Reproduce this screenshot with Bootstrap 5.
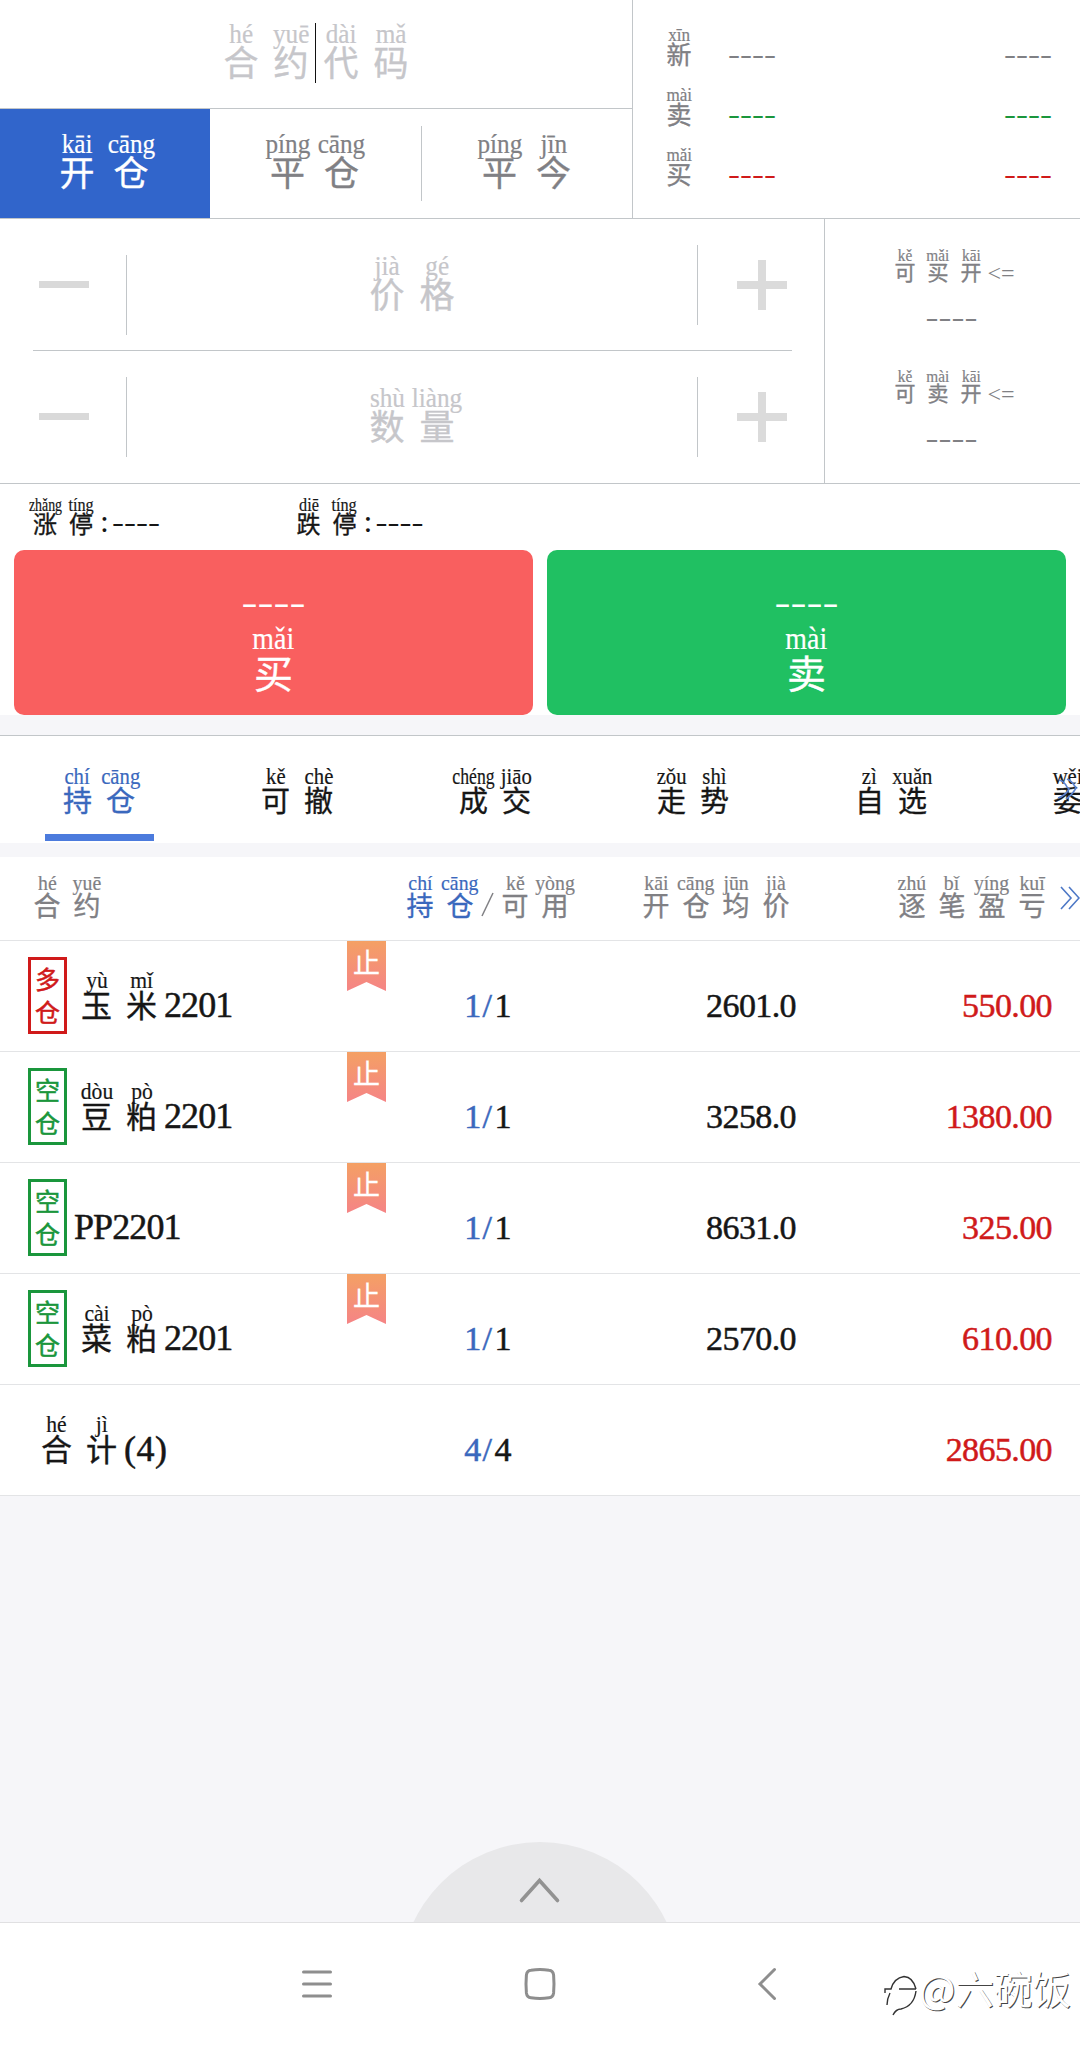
<!DOCTYPE html>
<html lang="zh-CN">
<head>
<meta charset="utf-8">
<meta name="viewport" content="width=device-width, initial-scale=1">
<title>期货交易</title>
<link href="https://cdn.jsdelivr.net/npm/bootstrap@5.3.0/dist/css/bootstrap.min.css" rel="stylesheet">
<style>
  :root { --line:#c2c6c9; --soft:#e3e4e6; --blue:#3165cb; --link:#3a68bd; --red:#d01a1a; --green:#1a963c; --gray:#808084; --hint:#c6c6ca; --page:#f6f6f9; }
  body { width:1080px; height:2052px; overflow:hidden; background:var(--page); color:#161616; font-family:"Liberation Serif","Noto Sans CJK SC",serif; line-height:1; }
  /* annotated character: pinyin above, hanzi below */
  .zi { display:inline-flex; flex-direction:column; align-items:center; flex:none; width:var(--p); white-space:nowrap; }
  .zi i { font-style:normal; font-size:var(--r); line-height:var(--r); transform:translateY(1px) scaleX(.9); -webkit-text-stroke:.2px currentColor; }
  .zi i.tight { transform:translateY(1px) scaleX(.77); }
  .zi b { font-family:"Noto Sans CJK SC",sans-serif; font-weight:400; font-size:var(--h); line-height:.84em; -webkit-text-stroke:.35px currentColor; }
  .lat { line-height:.61em; white-space:nowrap; }
  .s-xl { --h:39px; --r:31px; --p:52px; }
  .s-lg { --h:35px; --r:28px; --p:50px; }
  .s-lg b { transform:translateY(-1px); }
  .s-tab { --h:29px; --r:23px; --p:43px; }
  .s-head { --h:27px; --r:22px; --p:40px; }
  .s-row { --h:31px; --r:24px; --p:45px; }
  .s-quote { --h:25px; --r:19px; --p:36px; }
  .s-limit { --h:24px; --r:18px; --p:36px; }
  .s-cap { --h:21px; --r:17px; --p:33px; }
  .gray { color:var(--gray); } .hint { color:var(--hint); } .link { color:var(--link); } .up { color:var(--red); } .down { color:var(--green); }
  .dash { font-size:36px; transform:scaleY(.72); transform-origin:50% 68%; }
  .quote-head { height:219px; border-bottom:1px solid var(--line); }
  .head-left { width:633px; border-right:1px solid var(--line); }
  .code-field { height:109px; padding-top:19px; border-bottom:1px solid var(--line); }
  .caret { width:1px; height:60px; margin:4px -1px 0 0; background:#111; position:relative; left:-1px; }
  .side-tab { --p:54px; padding:20px 2px 0 0; flex:0 0 211px; }
  .side-tab.on { flex-basis:210px; background:var(--blue); color:#fff; }
  .vr-a { width:1px; height:75px; margin-top:17px; background:var(--line); flex:none; }
  .quotes { padding:24px 28px 0 28px; }
  .quote-line { height:60px; }
  .quote-line .zi { margin-right:31px; }
  .quote-line .zi + .lat, .quote-line .lat:last-child { margin-bottom:19px; }
  .entry { height:265px; border-bottom:1px solid var(--line); }
  .entry-left { width:825px; border-right:1px solid var(--line); }
  .step-row { height:132px; }
  .step-side { width:126px; } .step-side svg { display:block; }
  .step-input { padding-top:32px; }
  .vr-b { width:1px; height:80px; margin-top:26px; background:var(--line); flex:none; }
  .vr-b.low { margin-top:36px; }
  .entry-rule { height:1px; margin:-1px 32px 0 33px; background:var(--line); }
  .caps { padding:27px 2px 0 0; }
  .cap { height:121px; } .cap .lat { font-size:24px; margin-bottom:0; }
  .cap .dash { font-size:39px; line-height:68px; transform-origin:50% 57%; }
  .limits { height:66px; padding:11px 0 0 27px; }
  .limits .dash { font-size:36px; } .limits .colon { width:13px; font-size:32px; padding-left:1px; margin-bottom:2px; }
  .limits > div { width:263.5px; }
  .trade { background:#fff; height:165px; padding:0 14px; gap:14px; }
  .btn-trade { height:165px; padding:31px 0 0; border:0; border-radius:10px; color:#fff !important; line-height:1; }
  .btn-trade .dash { font-size:48px; line-height:40px; margin-bottom:1px; transform-origin:50% 64%; }
  .btn-trade b { transform:translateY(2px); }
  .buy, .buy:hover { background:#f95f5f; } .sell, .sell:hover { background:#20c062; }
  .tabs-bar { margin-top:20px; height:108px; border-top:1px solid var(--line); overflow:hidden; }
  .tab-one { flex:0 0 198px; padding:28px 0 0; }
  .tab-one .bar { width:109px; height:7px; margin:auto 0 2px; background:#4c7bdd; }
  .more { right:2px; top:41px; }
  .grid-line { display:grid; grid-template-columns:390px 195px 211px 256px; border-bottom:1px solid var(--soft); background:#fff; }
  .grid-head { margin-top:14px; height:84px; padding-top:14px; }
  .grid-head b { transform:translateY(1px); }
  .grid-row { height:111px; font-size:34px; letter-spacing:-.6px; -webkit-text-stroke:.5px currentColor; }
  .grid-row .cell { align-self:end; margin-bottom:34px; }
  .grid-row .name { font-size:36px; letter-spacing:-.9px; }
  .grid-row .zi { letter-spacing:0; }
  .tagbox { width:39px; height:77px; border:3px solid; margin:-2px 7px 0 28px; font:400 25px/33px "Noto Sans CJK SC",sans-serif; padding:2px 0 0; text-align:center; letter-spacing:0; }
  .ribbon { left:347px; top:0; width:39px; height:50px; color:#fff; text-align:center; font:400 27px/42px "Noto Sans CJK SC",sans-serif; background:linear-gradient(#f4a064,#f58486); clip-path:polygon(0 0,100% 0,100% 100%,50% 82%,0 100%); letter-spacing:0; -webkit-text-stroke:.3px; }
  .slash { padding:0 3px 0 2px; }
  .rest { height:426px; overflow:hidden; }
  .dome { width:280px; height:280px; border-radius:50%; background:#e8e8ea; top:346px; left:400px; }
  .navbar-sys { height:130px; background:#fff; border-top:1px solid #e0e0e2; }
  .navbar-sys > svg { position:absolute; }
  .wm { right:9px; top:41px; color:#fff; font:400 38.5px/46px "Noto Sans CJK SC",sans-serif; text-shadow:1px 1px 0 #444; }
</style>
<script src="https://cdn.jsdelivr.net/npm/bootstrap@5.3.0/dist/js/bootstrap.bundle.min.js"></script>
</head>
<body>
<header class="quote-head d-flex bg-white">
  <div class="head-left d-flex flex-column">
    <div class="code-field s-lg hint d-flex justify-content-center align-items-start">
      <span class="zi"><i>hé</i><b>合</b></span><span class="zi"><i>yuē</i><b>约</b></span><span class="caret"></span><span class="zi"><i>dài</i><b>代</b></span><span class="zi"><i>mǎ</i><b>码</b></span>
    </div>
    <div class="d-flex flex-fill s-lg gray">
      <div class="side-tab on text-center"><span class="zi"><i>kāi</i><b>开</b></span><span class="zi"><i>cāng</i><b>仓</b></span></div>
      <div class="side-tab text-center"><span class="zi"><i>píng</i><b>平</b></span><span class="zi"><i>cāng</i><b>仓</b></span></div>
      <div class="vr-a"></div>
      <div class="side-tab text-center"><span class="zi"><i>píng</i><b>平</b></span><span class="zi"><i>jīn</i><b>今</b></span></div>
    </div>
  </div>
  <div class="quotes flex-fill s-quote">
    <div class="quote-line d-flex align-items-end gray"><span class="zi align-self-start"><i>xīn</i><b>新</b></span><span class="lat dash">----</span><span class="lat dash ms-auto">----</span></div>
    <div class="quote-line d-flex align-items-end down"><span class="zi align-self-start gray"><i>mài</i><b>卖</b></span><span class="lat dash">----</span><span class="lat dash ms-auto">----</span></div>
    <div class="quote-line d-flex align-items-end up"><span class="zi align-self-start gray"><i>mǎi</i><b>买</b></span><span class="lat dash">----</span><span class="lat dash ms-auto">----</span></div>
  </div>
</header>

<section class="entry d-flex bg-white">
  <div class="entry-left">
    <div class="step-row d-flex">
      <div class="step-side"><svg width="126" height="131"><path d="M39 65.5h50" stroke="#d9d9d9" stroke-width="7"/></svg></div>
      <div class="vr-b low"></div>
      <div class="step-input flex-fill s-lg hint text-center"><span class="zi"><i>jià</i><b>价</b></span><span class="zi"><i>gé</i><b>格</b></span></div>
      <div class="vr-b"></div>
      <div class="step-side"><svg width="126" height="131"><path d="M39 66h50M64 41v50" stroke="#dbdbdb" stroke-width="8"/></svg></div>
    </div>
    <div class="entry-rule"></div>
    <div class="step-row d-flex">
      <div class="step-side"><svg width="126" height="131"><path d="M39 65.5h50" stroke="#d9d9d9" stroke-width="7"/></svg></div>
      <div class="vr-b"></div>
      <div class="step-input flex-fill s-lg hint text-center"><span class="zi"><i>shù</i><b>数</b></span><span class="zi"><i>liàng</i><b>量</b></span></div>
      <div class="vr-b"></div>
      <div class="step-side"><svg width="126" height="131"><path d="M39 66h50M64 41v50" stroke="#dbdbdb" stroke-width="8"/></svg></div>
    </div>
  </div>
  <div class="caps flex-fill s-cap gray text-center">
    <div class="cap"><div class="d-flex justify-content-center align-items-end"><span class="zi"><i>kě</i><b>可</b></span><span class="zi"><i>mǎi</i><b>买</b></span><span class="zi"><i>kāi</i><b>开</b></span><span class="lat">&lt;=</span></div><div class="dash">----</div></div>
    <div class="cap"><div class="d-flex justify-content-center align-items-end"><span class="zi"><i>kě</i><b>可</b></span><span class="zi"><i>mài</i><b>卖</b></span><span class="zi"><i>kāi</i><b>开</b></span><span class="lat">&lt;=</span></div><div class="dash">----</div></div>
  </div>
</section>

<section class="limits d-flex align-items-start bg-white s-limit">
  <div class="d-flex align-items-end"><span class="zi"><i class="tight">zhǎng</i><b>涨</b></span><span class="zi"><i>tíng</i><b>停</b></span><span class="lat colon">:</span><span class="lat dash">----</span></div>
  <div class="d-flex align-items-end"><span class="zi"><i>diē</i><b>跌</b></span><span class="zi"><i>tíng</i><b>停</b></span><span class="lat colon">:</span><span class="lat dash">----</span></div>
</section>
<section class="trade d-flex s-xl">
  <button class="btn btn-trade buy flex-fill d-flex flex-column align-items-center"><span class="dash">----</span><span class="zi"><i>mǎi</i><b>买</b></span></button>
  <button class="btn btn-trade sell flex-fill d-flex flex-column align-items-center"><span class="dash">----</span><span class="zi"><i>mài</i><b>卖</b></span></button>
</section>

<nav class="tabs-bar d-flex bg-white position-relative s-tab">
  <div class="tab-one d-flex flex-column align-items-center link"><div class="d-flex"><span class="zi"><i>chí</i><b>持</b></span><span class="zi"><i>cāng</i><b>仓</b></span></div><div class="bar"></div></div>
  <div class="tab-one text-center"><span class="zi"><i>kě</i><b>可</b></span><span class="zi"><i>chè</i><b>撤</b></span></div>
  <div class="tab-one text-center"><span class="zi"><i class="tight">chéng</i><b>成</b></span><span class="zi"><i>jiāo</i><b>交</b></span></div>
  <div class="tab-one text-center"><span class="zi"><i>zǒu</i><b>走</b></span><span class="zi"><i>shì</i><b>势</b></span></div>
  <div class="tab-one text-center"><span class="zi"><i>zì</i><b>自</b></span><span class="zi"><i>xuǎn</i><b>选</b></span></div>
  <div style="padding:28px 0 0 56px"><span class="zi"><i>wěi</i><b>委</b></span></div>
  <svg class="more position-absolute" width="21" height="24" fill="none" stroke="#5b83cf" stroke-width="1.6"><path d="M2 3Q7 4 10 10L12 12Q8 19 1 21M10 2Q15 4 19 11Q15 18 9 22"/></svg>
</nav>

<main>
  <div class="grid-line grid-head s-head gray position-relative">
    <div class="d-flex" style="padding-left:27px"><span class="zi"><i>hé</i><b>合</b></span><span class="zi"><i>yuē</i><b>约</b></span></div>
    <div class="d-flex justify-content-center align-items-start"><span class="zi link"><i>chí</i><b>持</b></span><span class="zi link"><i>cāng</i><b>仓</b></span><svg width="15" height="46" stroke="#808084" stroke-width="1.5"><path d="M2 45L13 22"/></svg><span class="zi"><i>kě</i><b>可</b></span><span class="zi"><i>yòng</i><b>用</b></span></div>
    <div class="d-flex justify-content-end"><span class="zi"><i>kāi</i><b>开</b></span><span class="zi"><i>cāng</i><b>仓</b></span><span class="zi"><i>jūn</i><b>均</b></span><span class="zi"><i>jià</i><b>价</b></span></div>
    <div class="d-flex justify-content-end"><span class="zi"><i>zhú</i><b>逐</b></span><span class="zi"><i>bǐ</i><b>笔</b></span><span class="zi"><i>yíng</i><b>盈</b></span><span class="zi"><i>kuī</i><b>亏</b></span></div>
    <svg class="position-absolute" style="right:0;top:29px" width="20" height="24" fill="none" stroke="#4d78c6" stroke-width="1.6"><path d="M1 1L11 12L1 23M9 1L19 12L9 23"/></svg>
  </div>
  <div class="grid-line grid-row s-row position-relative">
    <div class="d-flex align-items-center"><div class="tagbox up">多<br>仓</div><div class="cell name d-flex align-items-end"><span class="zi"><i>yù</i><b>玉</b></span><span class="zi"><i>mǐ</i><b>米</b></span><span class="lat">2201</span></div></div>
    <div class="ribbon position-absolute">止</div>
    <div class="cell lat text-center"><span class="link">1<span class="slash">/</span></span>1</div><div class="cell lat text-end">2601.0</div><div class="cell lat text-end up">550.00</div>
  </div>
  <div class="grid-line grid-row s-row position-relative">
    <div class="d-flex align-items-center"><div class="tagbox down">空<br>仓</div><div class="cell name d-flex align-items-end"><span class="zi"><i>dòu</i><b>豆</b></span><span class="zi"><i>pò</i><b>粕</b></span><span class="lat">2201</span></div></div>
    <div class="ribbon position-absolute">止</div>
    <div class="cell lat text-center"><span class="link">1<span class="slash">/</span></span>1</div><div class="cell lat text-end">3258.0</div><div class="cell lat text-end up">1380.00</div>
  </div>
  <div class="grid-line grid-row s-row position-relative">
    <div class="d-flex align-items-center"><div class="tagbox down">空<br>仓</div><div class="cell name d-flex align-items-end"><span class="lat">PP2201</span></div></div>
    <div class="ribbon position-absolute">止</div>
    <div class="cell lat text-center"><span class="link">1<span class="slash">/</span></span>1</div><div class="cell lat text-end">8631.0</div><div class="cell lat text-end up">325.00</div>
  </div>
  <div class="grid-line grid-row s-row position-relative">
    <div class="d-flex align-items-center"><div class="tagbox down">空<br>仓</div><div class="cell name d-flex align-items-end"><span class="zi"><i>cài</i><b>菜</b></span><span class="zi"><i>pò</i><b>粕</b></span><span class="lat">2201</span></div></div>
    <div class="ribbon position-absolute">止</div>
    <div class="cell lat text-center"><span class="link">1<span class="slash">/</span></span>1</div><div class="cell lat text-end">2570.0</div><div class="cell lat text-end up">610.00</div>
  </div>
  <div class="grid-line grid-row s-row">
    <div class="cell name d-flex align-items-end" style="padding-left:34px;letter-spacing:.5px"><span class="zi"><i>hé</i><b>合</b></span><span class="zi"><i>jì</i><b>计</b></span><span class="lat">(4)</span></div>
    <div class="cell lat text-center"><span class="link">4<span class="slash">/</span></span>4</div><div></div><div class="cell lat text-end up">2865.00</div>
  </div>
  <div class="rest position-relative">
    <div class="dome position-absolute"><svg class="position-absolute" style="left:118px;top:35px" width="44" height="28" fill="none" stroke="#929292" stroke-width="3.6" stroke-linecap="round"><path d="M3.500 23.500L21.500 3.500L39.500 23.500"/></svg></div>
  </div>
</main>

<footer class="navbar-sys position-relative">
  <svg style="left:300px;top:44px" width="34" height="34" stroke="#8e8e8e" stroke-width="3" stroke-linecap="round"><path d="M3.500 5h27M3.500 17h27M3.500 29h27"/></svg>
  <svg style="left:523px;top:44px" width="34" height="34" fill="none" stroke="#8e8e8e" stroke-width="3"><path d="M8 3.200Q17 2 26 3.200Q30 3.600 30.600 8Q31.400 17 30.600 26Q30 30.400 26 30.800Q17 32 8 30.800Q4 30.400 3.400 26Q2.600 17 3.400 8Q4 3.600 8 3.200Z"/></svg>
  <svg style="left:756px;top:44px" width="22" height="34" fill="none" stroke="#8e8e8e" stroke-width="3" stroke-linecap="round"><path d="M18.500 2.500L4 17L18.500 31.500"/></svg>
  <svg style="left:883px;top:50px" width="36" height="44" fill="none" stroke="#333" stroke-width="1.400"><path d="M2 20v-4h6Q11 5 21 3.500Q30 4 33 16M16 16h17M33 18Q31 33 18 36Q13 36 10 42M7 20Q4 26 4 32"/></svg>
  <div class="wm position-absolute">@六碗饭</div>
</footer>
</body>
</html>
